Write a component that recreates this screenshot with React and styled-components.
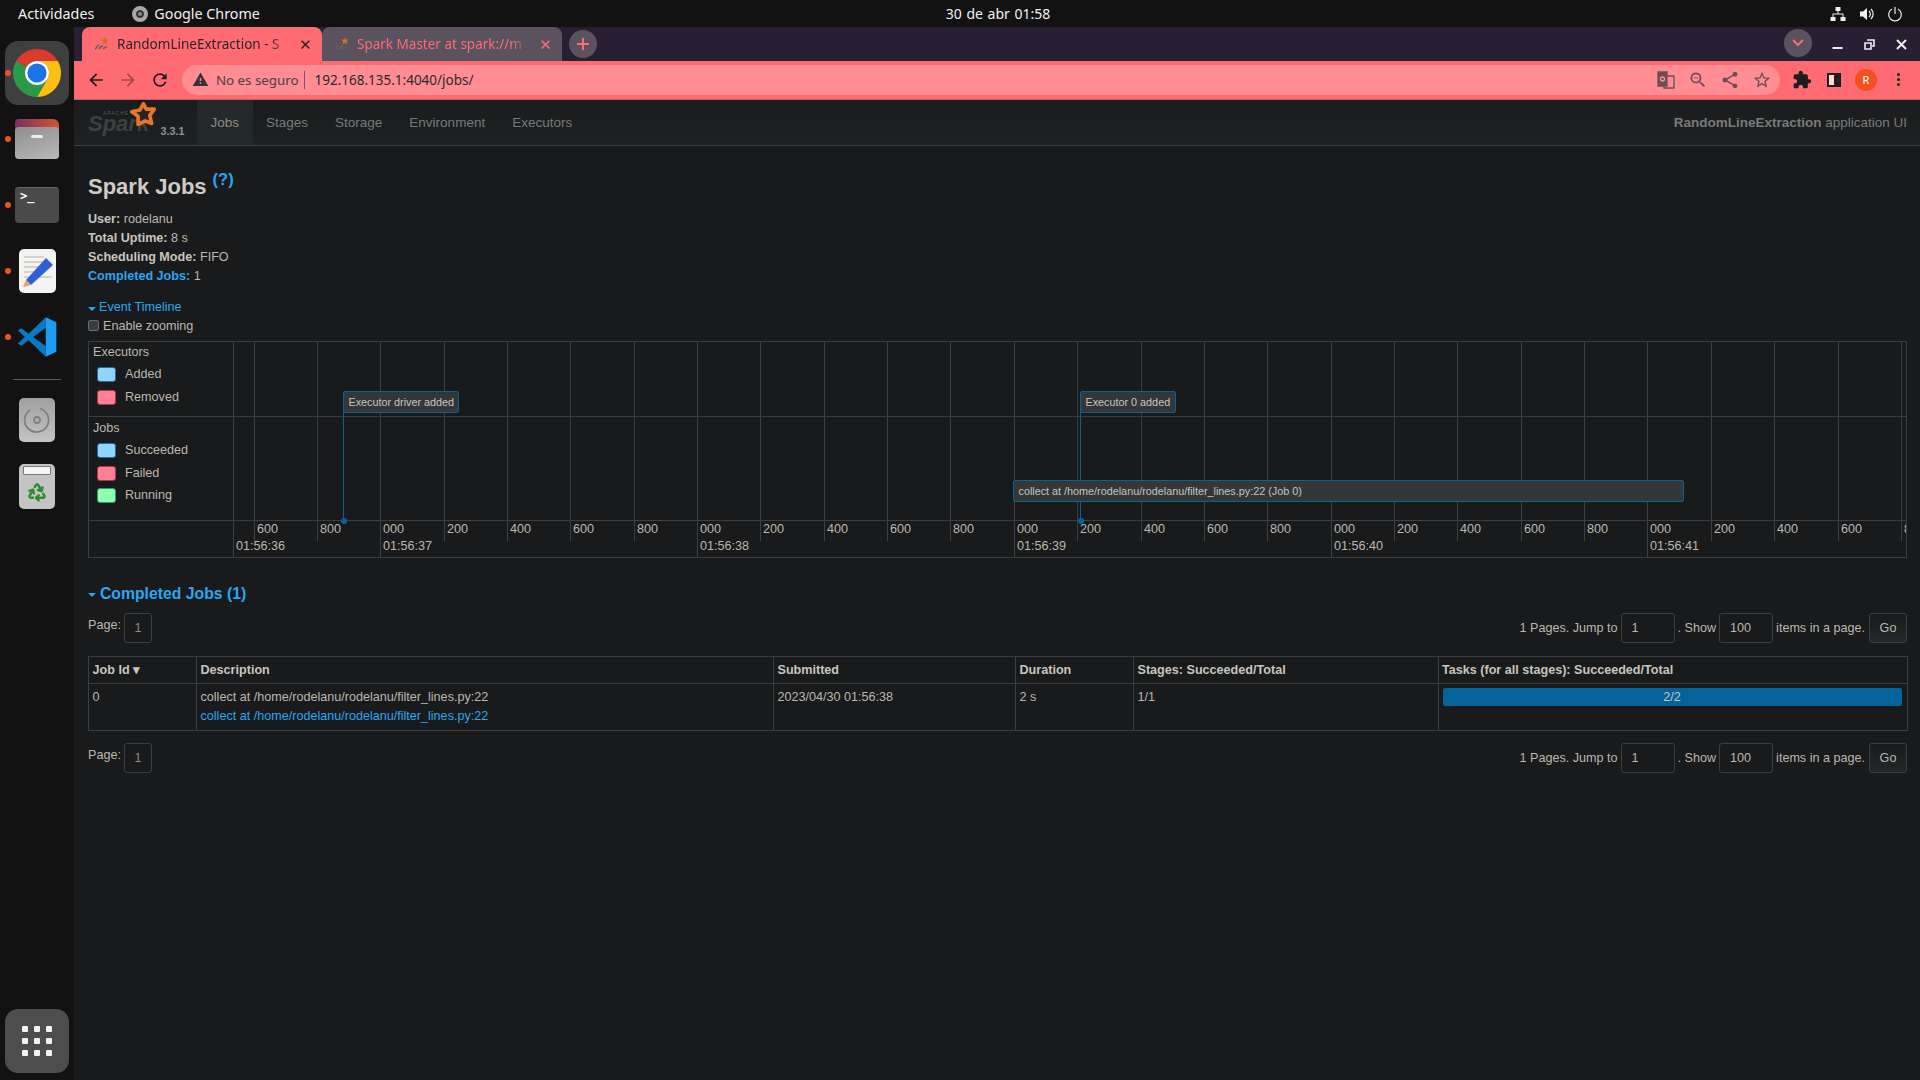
import React from "react";
import styled, { createGlobalStyle } from "styled-components";
import { Recycle } from "lucide-react";

const GlobalStyle = createGlobalStyle`
  html, body {
    margin: 0;
    padding: 0;
    height: 100%;
    background: #181a1b;
  }
  #root {
    height: 100%;
  }
  * {
    box-sizing: border-box;
  }
`;

const uiFont = `"Noto Sans", "Open Sans", sans-serif`;
const pageFont = `"Liberation Sans", Arial, sans-serif`;

const gridColor = "#3b3f42";
const textColor = "#bdb8af";
const linkColor = "#2ba6f2";
const barColor = "#06639a";

// material paths used by the browser toolbar
const paths = {
  back: "M20 11H7.83l5.59-5.59L12 4l-8 8 8 8 1.41-1.41L7.83 13H20v-2z",
  forward: "M12 4l-1.41 1.41L16.17 11H4v2h12.17l-5.58 5.59L12 20l8-8z",
  reload:
    "M17.65 6.35C16.2 4.9 14.21 4 12 4c-4.42 0-7.99 3.58-7.99 8s3.57 8 7.99 8c3.73 0 6.84-2.55 7.73-6h-2.08c-.82 2.33-3.04 4-5.65 4-3.31 0-6-2.69-6-6s2.69-6 6-6c1.66 0 3.14.69 4.22 1.78L13 11h7V4l-2.35 2.35z",
  warning: "M1 21h22L12 2 1 21zm12-3h-2v-2h2v2zm0-4h-2v-4h2v4z",
  extension:
    "M20.5 11H19V7c0-1.1-.9-2-2-2h-4V3.5C13 2.12 11.88 1 10.5 1S8 2.12 8 3.5V5H4c-1.1 0-1.99.9-1.99 2v3.8H3.5c1.49 0 2.7 1.21 2.7 2.7s-1.21 2.7-2.7 2.7H2V20c0 1.1.9 2 2 2h3.8v-1.5c0-1.49 1.21-2.7 2.7-2.7 1.49 0 2.7 1.21 2.7 2.7V22H17c1.1 0 2-.9 2-2v-4h1.5c1.38 0 2.5-1.12 2.5-2.5S21.88 11 20.5 11z",
  share:
    "M18 16.08c-.76 0-1.44.3-1.96.77L8.91 12.7c.05-.23.09-.46.09-.7s-.04-.47-.09-.7l7.05-4.11c.54.5 1.25.81 2.04.81 1.66 0 3-1.34 3-3s-1.34-3-3-3-3 1.34-3 3c0 .24.04.47.09.7L8.04 9.81C7.5 9.31 6.79 9 6 9c-1.66 0-3 1.34-3 3s1.34 3 3 3c.79 0 1.5-.31 2.04-.81l7.12 4.16c-.05.21-.08.43-.08.65 0 1.61 1.31 2.92 2.92 2.92 1.61 0 2.92-1.31 2.92-2.92s-1.31-2.92-2.92-2.92z",
  star:
    "M22 9.24l-7.19-.62L12 2 9.19 8.63 2 9.24l5.46 4.73L5.82 21 12 17.27 18.18 21l-1.63-7.03L22 9.24zM12 15.4l-3.76 2.27 1-4.28-3.32-2.88 4.38-.38L12 6.1l1.71 4.04 4.38.38-3.32 2.88 1 4.28L12 15.4z",
  zoomOut:
    "M15.5 14h-.79l-.28-.27A6.47 6.47 0 0 0 16 9.5 6.5 6.5 0 1 0 9.5 16c1.61 0 3.09-.59 4.23-1.57l.27.28v.79l5 4.99L20.49 19l-4.99-5zm-6 0C7.01 14 5 11.99 5 9.5S7.01 5 9.5 5 14 7.01 14 9.5 11.99 14 9.5 14zM7 9h5v1H7z",
};

const MaterialIcon = ({ name, size = 24, color = "#1d1d20" }) => (
  <svg width={size} height={size} viewBox="0 0 24 24" fill={color}>
    <path d={paths[name]} />
  </svg>
);

const ChromeLogo = ({ size }) => (
  <svg width={size} height={size} viewBox="4 4 40 40">
    <path d="M6.68 14A20 20 0 0 1 41.32 14H24A10 10 0 0 0 15.34 19Z" fill="#db3a2f" />
    <path d="M41.32 14A20 20 0 0 1 24 44L32.66 29A10 10 0 0 0 24 14Z" fill="#fdc010" />
    <path d="M24 44A20 20 0 0 1 6.68 14L15.34 19A10 10 0 0 0 32.66 29Z" fill="#2b9a48" />
    <circle cx="24" cy="24" r="10" fill="#fff" />
    <circle cx="24" cy="24" r="8" fill="#1a73e8" />
  </svg>
);

const SparkStar = ({ size }) => (
  <svg width={size} height={size} viewBox="0 0 30 30">
    <path
      d="M15 3l3 6 9 0-5 7 2 9-7-3-8 4 0-9-7-5 9-2z"
      fill="#2a2220"
      stroke="#e8762a"
      strokeWidth="4"
      strokeLinejoin="round"
    />
  </svg>
);

const Favicon = () => (
  <svg width="16" height="16" viewBox="0 0 16 16">
    <path d="M1 13c2-1 2-4 4-4M5 13c1-2 2-3 4-3M9 13c1-1 2-2 4-2" stroke="#6d5f5c" strokeWidth="1.6" fill="none" />
    <path d="M11 1l.8 2.6 2.7-.3-1.8 2.2 1 2.8-2.7-1.4-2.4 1.3.6-2.8L7 3.6l2.9-.2z" fill="#c8702c" />
  </svg>
);

const Page = styled.div`
  width: 100%;
  height: 100vh;
  min-height: 1080px;
  display: flex;
  flex-direction: column;
  background: #181a1b;
  overflow: hidden;
`;

const TopBar = styled.header`
  height: 27px;
  display: grid;
  grid-template-columns: 1fr auto 1fr;
  align-items: center;
  background: #121212;
  color: #f0f0f0;
  font-family: ${uiFont};
  font-size: 14.3px;
`;

const TopLeft = styled.div`
  display: flex;
  align-items: center;
  padding-left: 18px;
  gap: 38px;
`;

const AppName = styled.div`
  display: flex;
  align-items: center;
  gap: 6px;
`;

const AppDot = styled.span`
  width: 16px;
  height: 16px;
  border-radius: 50%;
  background: #8a8a8a;
  border: 4px solid #a8a8a8;
  box-shadow: inset 0 0 0 2px #333;
`;

const Clock = styled.div`
  padding-left: 76px;
  font-size: 14px;
  word-spacing: 1px;
`;

const TopRight = styled.div`
  display: flex;
  justify-content: flex-end;
  align-items: center;
  gap: 12.5px;
  padding-right: 17px;
`;

const Body = styled.div`
  flex: 1;
  display: flex;
  min-height: 0;
`;

const Dock = styled.nav`
  width: 74px;
  flex: none;
  background: #121212;
  display: flex;
  flex-direction: column;
  align-items: center;
  padding: 14px 0 7px;
`;

const DockSlot = styled.div`
  position: relative;
  width: 64px;
  height: 64px;
  margin-bottom: 2px;
  border-radius: 13px;
  display: flex;
  align-items: center;
  justify-content: center;
  background: ${(p) => (p.$active ? "#3f3f3f" : "transparent")};
`;

const RunDot = styled.span`
  position: absolute;
  left: 0;
  top: 29px;
  width: 6px;
  height: 6px;
  border-radius: 50%;
  background: #e95420;
`;

const DockRule = styled.div`
  width: 48px;
  height: 1px;
  background: #5c5c5c;
  margin: 8px 0 8px;
`;

const FolderIcon = styled.div`
  position: relative;
  width: 44px;
  height: 40px;
  border-radius: 4px 6px 4px 4px;
  background: linear-gradient(90deg, #7b2f63, #d2572f);

  &::after {
    content: "";
    position: absolute;
    left: 0;
    right: 0;
    bottom: 0;
    height: 32px;
    border-radius: 4px;
    background: linear-gradient(160deg, #8e8e8e, #b9b9b9);
  }

  &::before {
    content: "";
    position: absolute;
    z-index: 1;
    top: 16px;
    left: 16px;
    width: 12px;
    height: 3px;
    border-radius: 2px;
    background: #eee;
  }
`;

const TerminalIcon = styled.div`
  width: 44px;
  height: 36px;
  border-radius: 4px;
  background: #4a4a4a;
  border-top: 1px solid #666;
  color: #fff;
  font-family: "DejaVu Sans Mono", monospace;
  font-size: 12px;
  font-weight: bold;
  line-height: 12px;
  padding: 2px 0 0 5px;
`;

const EditorIcon = styled.div`
  width: 37px;
  height: 44px;
`;

const GreyTile = styled.div`
  width: 36px;
  height: 44px;
  border-radius: 5px;
  display: flex;
  align-items: center;
  justify-content: center;
  background: ${(p) => p.$bg};
`;

const TrashLid = styled.div`
  position: relative;
  width: 36px;
  height: 45px;
  border-radius: 5px;
  background: #c4c4c4;
  display: flex;
  align-items: flex-end;
  justify-content: center;
  padding-bottom: 7px;

  &::before {
    content: "";
    position: absolute;
    top: 2px;
    left: 4px;
    right: 4px;
    height: 7px;
    background: #f5f5f5;
    border: 1px solid #777;
    border-radius: 1px;
  }
`;

const GridButton = styled.button`
  margin-top: auto;
  width: 64px;
  height: 64px;
  border: none;
  padding: 0;
  border-radius: 13px;
  background: #4d4d4d;
  display: grid;
  grid-template-columns: repeat(3, 6px);
  grid-auto-rows: 6px;
  gap: 6px;
  align-content: center;
  justify-content: center;
`;

const GridDot = styled.span`
  background: #f2f2f2;
  border-radius: 1px;
`;

const Browser = styled.div`
  flex: 1;
  min-width: 0;
  display: flex;
  flex-direction: column;
`;

const TabStrip = styled.div`
  height: 34px;
  flex: none;
  display: flex;
  align-items: flex-end;
  background: #281f33;
  padding-left: 8px;
  font-family: ${uiFont};
  font-size: 13.5px;
`;

const Tab = styled.div`
  width: 240px;
  height: 34px;
  margin-right: ${(p) => (p.$active ? 0 : 7)}px;
  display: flex;
  align-items: center;
  gap: 7px;
  padding: 0 11px 0 12px;
  border-radius: 8px 8px 0 0;
  background: ${(p) => (p.$active ? "#ff6b72" : "#5a525f")};
  color: ${(p) => (p.$active ? "#2b2530" : "#ff6b72")};
`;

// the browser cuts the title off here, with a fade on its last letters
const TabTitle = styled.span`
  flex: 1;
  min-width: 0;
  white-space: nowrap;
  mask-image: linear-gradient(90deg, #000 88%, transparent 99%);
`;

const TabClose = styled.span`
  width: 12px;
  text-align: center;
  font-size: 15px;
  line-height: 1;
`;

const RoundButton = styled.div`
  width: 28px;
  height: 28px;
  border-radius: 50%;
  background: #5a525f;
  color: #ff6b72;
  margin-bottom: 3px;
  display: flex;
  align-items: center;
  justify-content: center;
  flex: none;
`;

const StripRight = styled.div`
  margin-left: auto;
  align-self: stretch;
  display: flex;
  align-items: center;
  padding: 0 12px 0 0;
  gap: 19px;
`;

const WindowButton = styled.div`
  width: 13px;
  height: 13px;
  display: flex;
  align-items: center;
  justify-content: center;
`;

const Toolbar = styled.div`
  height: 39px;
  flex: none;
  display: flex;
  align-items: center;
  background: #ff6b72;
  border-bottom: 1px solid #c95a60;
  padding: 0 12px 1px 11.5px;
  font-family: ${uiFont};
`;

const NavButtons = styled.div`
  display: flex;
  align-items: center;
  gap: 12px;
  width: 96.5px;
`;

const Omnibox = styled.div`
  width: 1598px;
  height: 30px;
  border-radius: 15px;
  background: #ff8d92;
  display: flex;
  align-items: center;
  padding: 0 8px 0 10px;
  font-size: 13.5px;
  color: #2a2a2e;
`;

const NotSecure = styled.span`
  margin-left: 7px;
  color: #4a3f48;
  font-size: 13.3px;
  padding-right: 6px;
  border-right: 1px solid #7d555c;
  line-height: 18px;
`;

const Url = styled.span`
  margin-left: 9px;
`;

const OmniIcons = styled.div`
  margin-left: auto;
  display: flex;
  align-items: center;
  gap: 12px;
`;

const ToolbarRight = styled.div`
  margin-left: auto;
  display: flex;
  align-items: center;
  gap: 12px;
`;

const Avatar = styled.div`
  width: 22px;
  height: 22px;
  border-radius: 50%;
  background: #f4511e;
  color: #fff;
  font-size: 11px;
  display: flex;
  align-items: center;
  justify-content: center;
  margin: 0 -1px;
`;

const SidePanel = styled.div`
  width: 14px;
  height: 14px;
  border: 2px solid #1d1d20;
  border-right-width: 7px;
  margin: 0 3px;
  background: #ffd9da;
`;

const Kebab = styled.div`
  width: 20px;
  display: flex;
  flex-direction: column;
  align-items: center;
  gap: 2px;
`;

const KebabDot = styled.span`
  width: 3px;
  height: 3px;
  border-radius: 50%;
  background: #1d1d20;
`;

const SparkNav = styled.div`
  height: 46px;
  flex: none;
  display: flex;
  align-items: stretch;
  background: linear-gradient(#1a1c1e, #1e2122);
  border-bottom: 1px solid #3b3f42;
  font-family: ${pageFont};
  font-size: 13.5px;
  padding: 0 13px 0 14px;
  color: #7a7a7a;
`;

const Brand = styled.div`
  position: relative;
  width: 109px;
`;

const BrandWord = styled.span`
  position: absolute;
  left: 0;
  top: 9px;
  font-size: 22px;
  line-height: 30px;
  font-style: italic;
  font-weight: bold;
  color: #3e4041;
`;

const BrandStar = styled.span`
  position: absolute;
  left: 42px;
  top: 1px;
`;

const Apache = styled.span`
  position: absolute;
  left: 15px;
  top: 10px;
  font-size: 5px;
  line-height: 6px;
  letter-spacing: 1px;
  color: #55575a;
`;

const Version = styled.span`
  position: absolute;
  left: 72.5px;
  top: 25px;
  font-size: 10.8px;
  font-weight: bold;
  color: #8b9198;
`;

const NavItem = styled.a`
  display: flex;
  align-items: center;
  padding: 0 13.5px;
  background: ${(p) => (p.$active ? "#23282a" : "transparent")};
  color: ${(p) => (p.$active ? "#8f8b85" : "#78797a")};
`;

const NavNote = styled.div`
  margin-left: auto;
  align-self: center;
`;

const Content = styled.main`
  flex: 1;
  padding: 0 13px 0 14px;
  font-family: ${pageFont};
  font-size: 12.6px;
  line-height: 19px;
  color: ${textColor};
`;

const Title = styled.h3`
  margin: 22px 0 0;
  height: 42px;
  font-size: 22px;
  line-height: 37px;
  font-weight: bold;
  color: #cfcbc4;
`;

const Help = styled.sup`
  font-size: 16.5px;
  line-height: 0;
  color: ${linkColor};
  margin-left: 6px;
  vertical-align: 9px;
`;

const SummaryList = styled.ul`
  list-style: none;
  margin: 0;
  padding: 0;
`;

const SummaryItem = styled.li`
  height: 19px;
`;

const Strong = styled.strong`
  color: ${(p) => (p.$link ? linkColor : "#c9c5bd")};
`;

const TimelineToggle = styled.div`
  margin-top: 12px;
  display: flex;
  align-items: center;
  gap: 3px;
  height: 19px;
  color: ${linkColor};
`;

const Caret = styled.span`
  display: inline-block;
  width: 0;
  height: 0;
  border-left: 4px solid transparent;
  border-right: 4px solid transparent;
  border-top: 4px solid ${linkColor};
  margin-top: 2px;
`;

const ZoomRow = styled.label`
  display: flex;
  align-items: center;
  height: 19px;
  gap: 4px;
`;

const Check = styled.span`
  width: 11px;
  height: 11px;
  border: 1px solid #6b6b6b;
  border-radius: 2px;
  background: #3a3d40;
  margin-top: -2px;
`;

const Timeline = styled.section`
  margin-top: 5px;
  height: 217px;
  border: 1px solid ${gridColor};
  display: grid;
  grid-template-columns: 145px 1fr;
  grid-template-rows: 75px 104px 36px;
`;

const LegendCell = styled.div`
  border-right: 1px solid ${gridColor};
  border-bottom: ${(p) => (p.$last ? "none" : `1px solid ${gridColor}`)};
  padding: ${(p) => p.$top ?? 0}px 0 0 4px;
`;

const LegendTitle = styled.div`
  height: 20px;
  line-height: 20px;
  margin-bottom: 1px;
`;

const LegendRow = styled.div`
  height: 22.8px;
  display: flex;
  align-items: center;
  padding-left: 4px;
  gap: 9px;
`;

const Swatch = styled.span`
  width: 19px;
  height: 15px;
  border-radius: 3px;
  background: ${(p) => p.$fill};
  border: 1px solid ${(p) => p.$edge};
`;

const Chart = styled.div`
  position: relative;
  grid-column: 2;
  grid-row: 1 / 4;
  overflow: hidden;
`;

const RowLine = styled.div`
  position: absolute;
  left: 0;
  right: 0;
  height: 1px;
  background: ${gridColor};
`;

const Tick = styled.div`
  position: absolute;
  top: 0;
  width: 1px;
  background: ${gridColor};
  height: ${(p) => (p.$major ? 215 : 199)}px;
`;

const TickLabel = styled.span`
  position: absolute;
  top: 178px;
  white-space: nowrap;
`;

const DateLabel = styled.span`
  position: absolute;
  top: 195px;
  white-space: nowrap;
`;

const EventBox = styled.div`
  position: absolute;
  height: 22px;
  border: 1px solid ${barColor};
  border-radius: 2px;
  background: #33373a;
  color: #c9c5bd;
  font-size: 10.8px;
  line-height: 20px;
  padding-left: 4.5px;
  white-space: nowrap;
`;

const EventStem = styled.div`
  position: absolute;
  width: 1px;
  background: ${barColor};
`;

const EventDot = styled.div`
  position: absolute;
  width: 6px;
  height: 6px;
  border-radius: 50%;
  background: ${barColor};
`;

const SectionHead = styled.h4`
  margin: 26px 0 0;
  height: 19px;
  display: flex;
  align-items: center;
  gap: 4px;
  font-size: 15.75px;
  font-weight: bold;
  color: ${linkColor};
`;

const PagerBar = styled.div`
  margin-top: ${(p) => p.$top}px;
  height: 30px;
  display: flex;
  align-items: center;
  justify-content: space-between;
`;

const PagerSide = styled.div`
  display: flex;
  align-items: center;
  gap: 3px;
`;

const PageBox = styled.span`
  width: 28px;
  height: 30px;
  border: 1px solid ${gridColor};
  border-radius: 3px;
  display: flex;
  align-items: center;
  justify-content: center;
  color: #8f8a80;
`;

const PageLabel = styled.span`
  margin-top: -5px;
`;

const NumberBox = styled.span`
  width: 54px;
  height: 30px;
  border: 1px solid ${gridColor};
  border-radius: 3px;
  display: flex;
  align-items: center;
  padding-left: 10px;
`;

const GoButton = styled.button`
  width: 38px;
  height: 30px;
  margin-left: 1px;
  padding: 0;
  border: 1px solid ${gridColor};
  border-radius: 3px;
  background: linear-gradient(#181a1b, #25282a);
  color: ${textColor};
  font: inherit;
`;

const JobsTable = styled.table`
  width: 100%;
  margin-top: 13px;
  border-collapse: collapse;
  table-layout: fixed;
`;

const HeadCell = styled.th`
  height: 27px;
  padding: 0 4px 0 3.5px;
  border: 1px solid ${gridColor};
  text-align: left;
  font-weight: bold;
  color: #c9c5bd;
  white-space: nowrap;
`;

const Cell = styled.td`
  height: 47px;
  padding: 3.5px 4px 0 3.5px;
  border: 1px solid ${gridColor};
  vertical-align: top;
`;

const CellLink = styled.a`
  display: block;
  color: ${linkColor};
`;

const Progress = styled.div`
  height: 18px;
  margin: 0.5px 1px 0 0.5px;
  border-radius: 2px;
  background: ${barColor};
  text-align: center;
  line-height: 18px;
  color: #c9c5bd;
`;

const legendColors = {
  blue: ["#8fd6ff", "#1f6f9e"],
  red: ["#ff7f95", "#a83a50"],
  green: ["#8fffb0", "#2f9a5f"],
};

const executorLegend = [
  ["Added", "blue"],
  ["Removed", "red"],
];
const jobLegend = [
  ["Succeeded", "blue"],
  ["Failed", "red"],
  ["Running", "green"],
];

// chart offsets are measured from the left edge of the plot area
const tickStep = 63.36;
const tickStart = 19.5;
const tickNames = ["600", "800", "000", "200", "400"];
const ticks = Array.from({ length: 27 }, (_, i) => ({
  x: Math.round(tickStart + tickStep * i),
  name: tickNames[i % 5],
  major: i % 5 === 2,
}));

const dates = [
  ["01:56:36", 2],
  ["01:56:37", 149],
  ["01:56:38", 466],
  ["01:56:39", 783],
  ["01:56:40", 1100],
  ["01:56:41", 1416],
];

const columns = [
  ["Job Id ▾", 108],
  ["Description", 577],
  ["Submitted", 242],
  ["Duration", 118],
  ["Stages: Succeeded/Total", 304.5],
  ["Tasks (for all stages): Succeeded/Total", 469],
];

const Legend = ({ title, items, top, last }) => (
  <LegendCell $top={top} $last={last}>
    <LegendTitle>{title}</LegendTitle>
    {items.map(([name, color]) => (
      <LegendRow key={name}>
        <Swatch $fill={legendColors[color][0]} $edge={legendColors[color][1]} />
        {name}
      </LegendRow>
    ))}
  </LegendCell>
);

const Pager = ({ top }) => (
  <PagerBar $top={top}>
    <PagerSide>
      <PageLabel>Page:</PageLabel>
      <PageBox>1</PageBox>
    </PagerSide>
    <PagerSide>
      1 Pages. Jump to
      <NumberBox>1</NumberBox>
      . Show
      <NumberBox>100</NumberBox>
      items in a page.
      <GoButton>Go</GoButton>
    </PagerSide>
  </PagerBar>
);

const App = () => {
  return (
    <Page>
      <GlobalStyle />
      <TopBar>
        <TopLeft>
          Actividades
          <AppName>
            <AppDot />
            Google Chrome
          </AppName>
        </TopLeft>
        <Clock>30 de abr 01:58</Clock>
        <TopRight>
          <svg width="16" height="16" viewBox="0 0 16 16" fill="#eee">
            <rect x="5.5" y="1" width="5" height="4" />
            <rect x="0.5" y="11" width="5" height="4" />
            <rect x="10.5" y="11" width="5" height="4" />
            <path d="M7.5 5h1v2.5H13.5V11h-1V8.5h-9V11h-1V7.5h5z" />
          </svg>
          <svg width="16" height="16" viewBox="0 0 16 16" fill="#eee">
            <path d="M1 5.5h3L8 2v12l-4-3.500H1z" />
            <path d="M10 5a4 4 0 0 1 0 6M12 3a7 7 0 0 1 0 10" fill="none" stroke="#eee" strokeWidth="1.2" />
          </svg>
          <svg width="16" height="16" viewBox="0 0 16 16" fill="none" stroke="#eee" strokeWidth="1.2">
            <path d="M5 3a6.300 6.300 0 1 0 6 0M8 1v7" />
          </svg>
        </TopRight>
      </TopBar>
      <Body>
        <Dock>
          <DockSlot $active>
            <RunDot />
            <ChromeLogo size={48} />
          </DockSlot>
          <DockSlot>
            <RunDot />
            <FolderIcon />
          </DockSlot>
          <DockSlot>
            <RunDot />
            <TerminalIcon>{">_"}</TerminalIcon>
          </DockSlot>
          <DockSlot>
            <RunDot />
            <EditorIcon>
              <svg width="37" height="44" viewBox="0 0 37 44">
                <rect width="37" height="44" rx="5" fill="#f3f3f3" />
                <path d="M5 8h20M5 13h20M5 18h18M5 23h14M5 28h28" stroke="#cbc8c0" strokeWidth="1.500" />
                <path d="M27 9l7 7-22 20-5-5z" fill="#2f5fd6" />
                <path d="M7 31l5 5-8 2z" fill="#e9a05a" />
              </svg>
            </EditorIcon>
          </DockSlot>
          <DockSlot>
            <RunDot />
            <svg width="42" height="42" viewBox="0 0 100 100">
              <path
                d="M71 3L30 42 13 29 4 34 21 50 4 66 13 71 30 58 71 97V72L41 50 71 28Z"
                fill="#0a78c4"
              />
              <path d="M71 3L96 15V85L71 97Z" fill="#1f9cf0" />
            </svg>
          </DockSlot>
          <DockRule />
          <DockSlot>
            <GreyTile $bg="linear-gradient(#a0a0a0, #c4c4c4)">
              <svg width="28" height="28" viewBox="0 0 28 28" fill="none" stroke="#808080" strokeWidth="1.800">
                <path d="M17 2.500A12 12 0 1 1 7 4" />
                <circle cx="14" cy="14" r="3" />
              </svg>
            </GreyTile>
          </DockSlot>
          <DockSlot>
            <TrashLid>
              <Recycle size={20} color="#2e8b2e" strokeWidth={3} />
            </TrashLid>
          </DockSlot>
          <GridButton aria-label="Aplicaciones">
            {Array.from({ length: 9 }, (_, i) => (
              <GridDot key={i} />
            ))}
          </GridButton>
        </Dock>
        <Browser>
          <TabStrip>
            <Tab $active>
              <Favicon />
              <TabTitle>RandomLineExtraction - S</TabTitle>
              <TabClose>✕</TabClose>
            </Tab>
            <Tab>
              <Favicon />
              <TabTitle>Spark Master at spark://m</TabTitle>
              <TabClose>✕</TabClose>
            </Tab>
            <RoundButton>
              <svg width="14" height="14" viewBox="0 0 14 14" stroke="#ff6b72" strokeWidth="2">
                <path d="M7 1v12M1 7h12" />
              </svg>
            </RoundButton>
            <StripRight>
              <RoundButton>
                <svg width="12" height="8" viewBox="0 0 12 8" fill="none" stroke="#ff6b72" strokeWidth="1.800">
                  <path d="M1 1l5 5 5-5" />
                </svg>
              </RoundButton>
              <WindowButton>
                <svg width="11" height="11" viewBox="0 0 11 11" fill="#eee">
                  <rect x="0.500" y="8" width="10" height="2" />
                </svg>
              </WindowButton>
              <WindowButton>
                <svg width="11" height="11" viewBox="0 0 11 11" fill="none" stroke="#eee" strokeWidth="1.600">
                  <path d="M3 1h7v6H8M1 4h6v6H1z" />
                </svg>
              </WindowButton>
              <WindowButton>
                <svg width="11" height="11" viewBox="0 0 11 11" stroke="#eee" strokeWidth="2">
                  <path d="M1 1l9 9M10 1l-9 9" />
                </svg>
              </WindowButton>
            </StripRight>
          </TabStrip>
          <Toolbar>
            <NavButtons>
              <MaterialIcon name="back" size={20} />
              <MaterialIcon name="forward" size={20} color="#a04a52" />
              <MaterialIcon name="reload" size={20} />
            </NavButtons>
            <Omnibox>
              <MaterialIcon name="warning" size={17} color="#3a3038" />
              <NotSecure>No es seguro</NotSecure>
              <Url>192.168.135.1:4040/jobs/</Url>
              <OmniIcons>
                <svg width="20" height="20" viewBox="0 0 20 20" fill="none" stroke="#6b4e56" strokeWidth="1.300">
                  <path d="M2 2h9v14H2z" fill="#6b4e56" />
                  <path d="M8 6h10v12H8z" />
                  <circle cx="6.500" cy="9" r="2" stroke="#ff8d92" />
                </svg>
                <MaterialIcon name="zoomOut" size={20} color="#6b4e56" />
                <MaterialIcon name="share" size={20} color="#6b4e56" />
                <MaterialIcon name="star" size={20} color="#6b4e56" />
              </OmniIcons>
            </Omnibox>
            <ToolbarRight>
              <MaterialIcon name="extension" size={20} />
              <SidePanel />
              <Avatar>R</Avatar>
              <Kebab>
                <KebabDot />
                <KebabDot />
                <KebabDot />
              </Kebab>
            </ToolbarRight>
          </Toolbar>
          <SparkNav>
            <Brand>
              <BrandWord>Spark</BrandWord>
              <Apache>APACHE</Apache>
              <BrandStar>
                <SparkStar size={27} />
              </BrandStar>
              <Version>3.3.1</Version>
            </Brand>
            <NavItem $active>Jobs</NavItem>
            <NavItem>Stages</NavItem>
            <NavItem>Storage</NavItem>
            <NavItem>Environment</NavItem>
            <NavItem>Executors</NavItem>
            <NavNote>
              <strong>RandomLineExtraction</strong> application UI
            </NavNote>
          </SparkNav>
          <Content>
            <Title>
              Spark Jobs<Help>(?)</Help>
            </Title>
            <SummaryList>
              <SummaryItem>
                <Strong>User:</Strong> rodelanu
              </SummaryItem>
              <SummaryItem>
                <Strong>Total Uptime:</Strong> 8 s
              </SummaryItem>
              <SummaryItem>
                <Strong>Scheduling Mode:</Strong> FIFO
              </SummaryItem>
              <SummaryItem>
                <Strong $link>Completed Jobs:</Strong> 1
              </SummaryItem>
            </SummaryList>
            <TimelineToggle>
              <Caret />
              Event Timeline
            </TimelineToggle>
            <ZoomRow>
              <Check />
              Enable zooming
            </ZoomRow>
            <Timeline>
              <Legend title="Executors" items={executorLegend} />
              <Chart>
                <RowLine style={{ top: 74 }} />
                <RowLine style={{ top: 178 }} />
                {ticks.map((t) => (
                  <React.Fragment key={t.x}>
                    <Tick $major={t.major} style={{ left: t.x }} />
                    <TickLabel style={{ left: t.x + 3 }}>{t.name}</TickLabel>
                  </React.Fragment>
                ))}
                {dates.map(([label, x]) => (
                  <DateLabel key={label} style={{ left: x }}>
                    {label}
                  </DateLabel>
                ))}
                <EventStem style={{ left: 109, top: 70, height: 108 }} />
                <EventDot style={{ left: 107, top: 176 }} />
                <EventBox style={{ left: 109, top: 49, width: 116 }}>Executor driver added</EventBox>
                <EventStem style={{ left: 846, top: 70, height: 108 }} />
                <EventDot style={{ left: 844, top: 176 }} />
                <EventBox style={{ left: 846, top: 49, width: 96 }}>Executor 0 added</EventBox>
                <EventBox style={{ left: 779, top: 138, width: 671 }}>
                  collect at /home/rodelanu/rodelanu/filter_lines.py:22 (Job 0)
                </EventBox>
              </Chart>
              <Legend title="Jobs" items={jobLegend} top={1} />
              <LegendCell $last />
            </Timeline>
            <SectionHead>
              <Caret />
              Completed Jobs (1)
            </SectionHead>
            <Pager top={10} />
            <JobsTable>
              <colgroup>
                {columns.map(([name, width]) => (
                  <col key={name} width={width} />
                ))}
              </colgroup>
              <thead>
                <tr>
                  {columns.map(([name]) => (
                    <HeadCell key={name}>{name}</HeadCell>
                  ))}
                </tr>
              </thead>
              <tbody>
                <tr>
                  <Cell>0</Cell>
                  <Cell>
                    collect at /home/rodelanu/rodelanu/filter_lines.py:22
                    <CellLink>collect at /home/rodelanu/rodelanu/filter_lines.py:22</CellLink>
                  </Cell>
                  <Cell>2023/04/30 01:56:38</Cell>
                  <Cell>2 s</Cell>
                  <Cell>1/1</Cell>
                  <Cell>
                    <Progress>2/2</Progress>
                  </Cell>
                </tr>
              </tbody>
            </JobsTable>
            <Pager top={12} />
          </Content>
        </Browser>
      </Body>
    </Page>
  );
};

export default App;
